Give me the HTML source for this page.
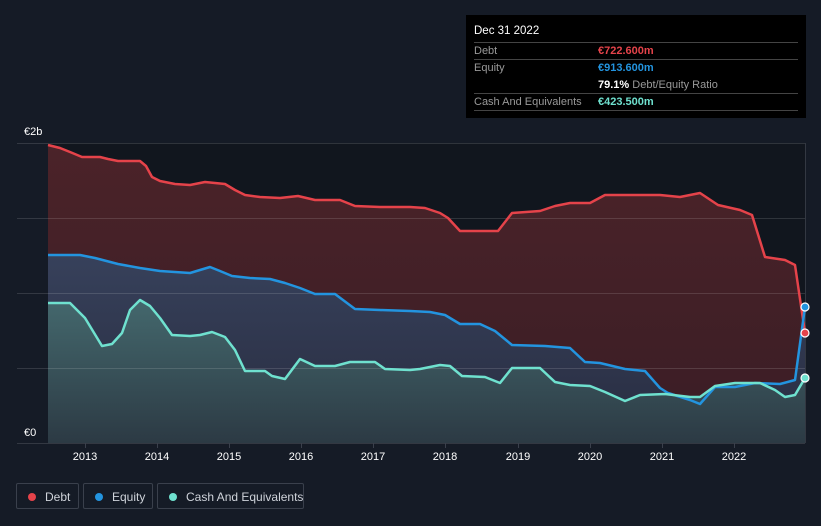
<!DOCTYPE html>
<html><head><style>
body{margin:0;width:821px;height:526px;background:#151b26;font-family:"Liberation Sans",sans-serif;overflow:hidden;position:relative}
.tt{position:absolute;left:466px;top:15px;width:340px;height:103px;background:#000;color:#fff;font-size:11px}
.tt .r{position:absolute;left:8px;right:8px;border-bottom:1px solid #444;height:17px}
.lg{position:absolute;top:483px;height:26px;border:1px solid #3a404c;border-radius:2px;color:#cfd3da;font-size:12px;line-height:26px;box-sizing:border-box;white-space:nowrap}
.dot{position:absolute;left:11px;top:9px;width:8px;height:8px;border-radius:50%}
</style></head><body>
<svg width="821" height="526" style="position:absolute;left:0;top:0">
<defs>
<linearGradient id="gd" x1="0" y1="0" x2="0" y2="1"><stop offset="0" stop-color="#4b2329"/><stop offset="1" stop-color="#3a1d25"/></linearGradient>
<linearGradient id="ge" x1="0" y1="0" x2="0" y2="1"><stop offset="0" stop-color="#37415b"/><stop offset="1" stop-color="#282c40"/></linearGradient>
<linearGradient id="gc" x1="0" y1="0" x2="0" y2="1"><stop offset="0" stop-color="#44686d"/><stop offset="1" stop-color="#2c3a44"/></linearGradient>
</defs>
<rect x="48" y="143" width="757" height="300" fill="#11161e"/>
<path d="M48,145 L60,148 70,152 82,157 100,157 108,159 118,161 140,161 146,166 152,177 160,181 175,184 190,185 205,182 225,184 235,190 245,195 260,197 280,198 298,196 315,200 340,200 355,206 380,207 410,207 425,208 440,213 448,218 460,231 498,231 512,213 540,211 555,206 570,203 590,203 605,195 630,195 660,195 680,197 700,193 718,205 740,210 752,215 765,257 785,260 795,265 805,333 L805,443 48,443Z" fill="url(#gd)"/>
<path d="M48,255 L80,255 95,258 118,264 140,268 160,271 190,273 200,270 210,267 220,271 232,276 250,278 270,279 285,283 300,288 315,294 335,294 355,309 380,310 410,311 430,312 445,315 460,324 480,324 495,331 512,345 545,346 570,348 585,362 600,363 625,369 645,371 660,388 668,393 690,400 700,404 715,387 735,387 755,383 780,384 795,380 805,307 L805,443 48,443Z" fill="url(#ge)"/>
<path d="M48,303 L70,303 85,318 102,346 112,344 122,333 130,310 140,300 150,306 160,318 172,335 190,336 200,335 212,332 225,337 235,350 245,371 265,371 272,376 285,379 300,359 315,366 335,366 350,362 375,362 385,369 410,370 420,369 440,365 450,366 462,376 485,377 500,383 512,368 540,368 555,382 570,385 590,386 605,392 625,401 640,395 665,394 690,397 700,397 715,386 735,383 760,383 775,390 785,397 795,395 805,378 L805,443 48,443Z" fill="url(#gc)"/>
<g stroke="#ffffff" stroke-opacity="0.13" stroke-width="1">
<line x1="17" y1="143.5" x2="805" y2="143.5"/><line x1="17" y1="218.5" x2="805" y2="218.5"/><line x1="17" y1="293.5" x2="805" y2="293.5"/><line x1="17" y1="368.5" x2="805" y2="368.5"/><line x1="17" y1="443.5" x2="805" y2="443.5"/><line x1="805.5" y1="143" x2="805.5" y2="443"/>
</g>
<g stroke="#3a404c" stroke-width="1">
<line x1="85.5" y1="443" x2="85.5" y2="448"/><line x1="157.5" y1="443" x2="157.5" y2="448"/><line x1="229.5" y1="443" x2="229.5" y2="448"/><line x1="301.5" y1="443" x2="301.5" y2="448"/><line x1="373.5" y1="443" x2="373.5" y2="448"/><line x1="445.5" y1="443" x2="445.5" y2="448"/><line x1="518.5" y1="443" x2="518.5" y2="448"/><line x1="590.5" y1="443" x2="590.5" y2="448"/><line x1="662.5" y1="443" x2="662.5" y2="448"/><line x1="734.5" y1="443" x2="734.5" y2="448"/>
</g>
<g fill="none" stroke-width="2.5" stroke-linejoin="round">
<path stroke="#e5434a" d="M48,145 L60,148 70,152 82,157 100,157 108,159 118,161 140,161 146,166 152,177 160,181 175,184 190,185 205,182 225,184 235,190 245,195 260,197 280,198 298,196 315,200 340,200 355,206 380,207 410,207 425,208 440,213 448,218 460,231 498,231 512,213 540,211 555,206 570,203 590,203 605,195 630,195 660,195 680,197 700,193 718,205 740,210 752,215 765,257 785,260 795,265 805,333"/>
<path stroke="#2394df" d="M48,255 L80,255 95,258 118,264 140,268 160,271 190,273 200,270 210,267 220,271 232,276 250,278 270,279 285,283 300,288 315,294 335,294 355,309 380,310 410,311 430,312 445,315 460,324 480,324 495,331 512,345 545,346 570,348 585,362 600,363 625,369 645,371 660,388 668,393 690,400 700,404 715,387 735,387 755,383 780,384 795,380 805,307"/>
<path stroke="#6fe1cf" d="M48,303 L70,303 85,318 102,346 112,344 122,333 130,310 140,300 150,306 160,318 172,335 190,336 200,335 212,332 225,337 235,350 245,371 265,371 272,376 285,379 300,359 315,366 335,366 350,362 375,362 385,369 410,370 420,369 440,365 450,366 462,376 485,377 500,383 512,368 540,368 555,382 570,385 590,386 605,392 625,401 640,395 665,394 690,397 700,397 715,386 735,383 760,383 775,390 785,397 795,395 805,378"/>
</g>
<circle cx="805" cy="333" r="4" fill="#e5434a" stroke="#fff" stroke-width="1.2"/>
<circle cx="805" cy="307" r="4" fill="#2394df" stroke="#fff" stroke-width="1.2"/>
<circle cx="805" cy="378" r="4" fill="#6fe1cf" stroke="#fff" stroke-width="1.2"/>
<g fill="#fff" font-size="11" font-family="Liberation Sans,sans-serif">
<text x="24" y="135">€2b</text><text x="24" y="436">€0</text>
<g text-anchor="middle"><text x="85" y="460">2013</text><text x="157" y="460">2014</text><text x="229" y="460">2015</text><text x="301" y="460">2016</text><text x="373" y="460">2017</text><text x="445" y="460">2018</text><text x="518" y="460">2019</text><text x="590" y="460">2020</text><text x="662" y="460">2021</text><text x="734" y="460">2022</text></g>
</g>
</svg>
<div class="tt">
<div style="position:absolute;left:8px;top:10px;font-size:11.5px">Dec 31 2022</div>
<div class="r" style="top:10px"></div>
<div class="r" style="top:27px"><span style="color:#999;position:absolute;top:3px">Debt</span><span style="color:#e5434a;position:absolute;left:124px;top:3px;font-weight:bold">€722.600m</span></div>
<div class="r" style="top:44px;border:0"><span style="color:#999;position:absolute;top:3px">Equity</span><span style="color:#2394df;position:absolute;left:124px;top:3px;font-weight:bold">€913.600m</span></div>
<div class="r" style="top:61px"><span style="position:absolute;left:124px;top:3px"><b>79.1%</b> <span style="color:#999">Debt/Equity Ratio</span></span></div>
<div class="r" style="top:78px"><span style="color:#999;position:absolute;top:3px">Cash And Equivalents</span><span style="color:#6fe1cf;position:absolute;left:124px;top:3px;font-weight:bold">€423.500m</span></div>
</div>
<div class="lg" style="left:16px;width:63px"><span class="dot" style="background:#e5434a"></span><span style="position:absolute;left:28px">Debt</span></div>
<div class="lg" style="left:83px;width:70px"><span class="dot" style="background:#2394df"></span><span style="position:absolute;left:28px">Equity</span></div>
<div class="lg" style="left:157px;width:147px"><span class="dot" style="background:#6fe1cf"></span><span style="position:absolute;left:28px">Cash And Equivalents</span></div>
</body></html>
